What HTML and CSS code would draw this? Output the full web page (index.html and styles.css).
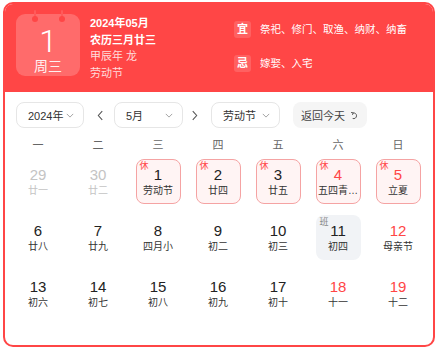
FILE: index.html
```html
<!DOCTYPE html>
<html lang="zh">
<head>
<meta charset="utf-8">
<link rel="stylesheet" href="styles.css">
</head>
<body>
<div class="card">
  <div class="header">
    <div class="datebox">
      <span class="ring ring-l"></span>
      <span class="ring ring-r"></span>
      <div class="big">1</div>
      <div class="week">周三</div>
    </div>
    <div class="info">
      <div class="l1">2024年05月</div>
      <div class="l1">农历三月廿三</div>
      <div class="l2">甲辰年 龙</div>
      <div class="l2">劳动节</div>
    </div>
    <div class="yiji">
      <div class="yj-row"><span class="badge">宜</span><span>祭祀、修门、取渔、纳财、纳畜</span></div>
      <div class="yj-row"><span class="badge">忌</span><span>嫁娶、入宅</span></div>
    </div>
  </div>

  <div class="controls">
    <div class="select sel-year"><span>2024年</span><svg class="chev" viewBox="0 0 10 6"><path d="M1 1l4 4 4-4" fill="none" stroke="#999" stroke-width="1.1"/></svg></div>
    <svg class="arrow" viewBox="0 0 8 12"><path d="M6 1L1.5 6 6 11" fill="none" stroke="#555" stroke-width="1.2"/></svg>
    <div class="select sel-month"><span>5月</span><svg class="chev" viewBox="0 0 10 6"><path d="M1 1l4 4 4-4" fill="none" stroke="#999" stroke-width="1.1"/></svg></div>
    <svg class="arrow" viewBox="0 0 8 12"><path d="M2 1l4.5 5L2 11" fill="none" stroke="#555" stroke-width="1.2"/></svg>
    <div class="select sel-hol"><span>劳动节</span><svg class="chev" viewBox="0 0 10 6"><path d="M1 1l4 4 4-4" fill="none" stroke="#999" stroke-width="1.1"/></svg></div>
    <div class="today">返回今天<svg class="undo" viewBox="0 0 10 10"><path d="M3.2 2.2A3.2 3.2 0 1 1 3 8.3" fill="none" stroke="#555" stroke-width="1.1"/><path d="M1.2 1.6l2.4 0.5-0.9 2.2" fill="none" stroke="#555" stroke-width="1.1"/></svg></div>
  </div>

  <div class="weekdays">
    <div>一</div><div>二</div><div>三</div><div>四</div><div>五</div><div>六</div><div>日</div>
  </div>

  <div class="grid">
    <div class="cell"><div class="box other"><div class="n">29</div><div class="lu">廿一</div></div></div>
    <div class="cell"><div class="box other"><div class="n">30</div><div class="lu">廿二</div></div></div>
    <div class="cell"><div class="box rest"><span class="tag">休</span><div class="n">1</div><div class="lu">劳动节</div></div></div>
    <div class="cell"><div class="box rest"><span class="tag">休</span><div class="n">2</div><div class="lu">廿四</div></div></div>
    <div class="cell"><div class="box rest"><span class="tag">休</span><div class="n">3</div><div class="lu">廿五</div></div></div>
    <div class="cell"><div class="box rest wk"><span class="tag">休</span><div class="n">4</div><div class="lu">五四青…</div></div></div>
    <div class="cell"><div class="box rest wk"><span class="tag">休</span><div class="n">5</div><div class="lu">立夏</div></div></div>

    <div class="cell"><div class="box"><div class="n">6</div><div class="lu">廿八</div></div></div>
    <div class="cell"><div class="box"><div class="n">7</div><div class="lu">廿九</div></div></div>
    <div class="cell"><div class="box"><div class="n">8</div><div class="lu">四月小</div></div></div>
    <div class="cell"><div class="box"><div class="n">9</div><div class="lu">初二</div></div></div>
    <div class="cell"><div class="box"><div class="n">10</div><div class="lu">初三</div></div></div>
    <div class="cell"><div class="box work"><span class="tag">班</span><div class="n">11</div><div class="lu">初四</div></div></div>
    <div class="cell"><div class="box wk"><div class="n">12</div><div class="lu">母亲节</div></div></div>

    <div class="cell"><div class="box"><div class="n">13</div><div class="lu">初六</div></div></div>
    <div class="cell"><div class="box"><div class="n">14</div><div class="lu">初七</div></div></div>
    <div class="cell"><div class="box"><div class="n">15</div><div class="lu">初八</div></div></div>
    <div class="cell"><div class="box"><div class="n">16</div><div class="lu">初九</div></div></div>
    <div class="cell"><div class="box"><div class="n">17</div><div class="lu">初十</div></div></div>
    <div class="cell"><div class="box wk"><div class="n">18</div><div class="lu">十一</div></div></div>
    <div class="cell"><div class="box wk"><div class="n">19</div><div class="lu">十二</div></div></div>
  </div>
</div>
</body>
</html>
```

FILE: styles.css
```css
* { box-sizing: border-box; }
html, body { margin: 0; padding: 0; background: #fff; }
body {
  font-family: "Liberation Sans", "Noto Sans CJK SC", sans-serif;
  color: #333;
}
.card {
  margin: 2px 0 0 3px;
  width: 432px;
  height: 345px;
  border: 2px solid #ff4646;
  border-radius: 10px;
  overflow: hidden;
  background: #fff;
}
.header {
  height: 88px;
  background: #ff4646;
  display: flex;
  align-items: flex-start;
  padding: 10px 0 0 11px;
  color: #fff;
}
.datebox {
  position: relative;
  width: 64px;
  height: 62px;
  border-radius: 9px;
  background: rgba(255, 255, 255, 0.2);
  display: flex;
  flex-direction: column;
  align-items: center;
}
.ring {
  position: absolute;
  top: -4px;
  width: 2px;
  height: 10px;
  background: #ff5a5a;
  border-radius: 1px;
}
.ring::after {
  content: "";
  position: absolute;
  left: -2px;
  bottom: -2px;
  width: 6px;
  height: 6px;
  border-radius: 50%;
  background: #ff4646;
}
.ring-l { left: 18px; }
.ring-r { left: 45px; }
.big {
  margin-top: 11px;
  font-size: 32px;
  line-height: 33px;
  font-family: Roboto, "Liberation Sans", sans-serif;
  font-weight: 300;
}
.week {
  font-size: 14px;
  line-height: 17px;
  opacity: 0.9;
}
.info {
  width: 144px;
  margin-left: 10px;
  padding-top: 1px;
}
.l1 {
  font-size: 11px;
  line-height: 16.5px;
  font-weight: bold;
}
.l2 {
  font-size: 11px;
  line-height: 16.5px;
  color: rgba(255, 255, 255, 0.82);
}
.yiji {
  display: flex;
  flex-direction: column;
  gap: 17px;
  padding-top: 7px;
}
.yj-row {
  display: flex;
  align-items: center;
  gap: 9px;
  font-size: 10.5px;
  line-height: 17px;
}
.badge {
  width: 17px;
  height: 17px;
  border-radius: 3px;
  background: rgba(255, 255, 255, 0.15);
  text-align: center;
  font-size: 11px;
  font-weight: bold;
  line-height: 17px;
}

.controls {
  display: flex;
  align-items: center;
  margin: 10px 0 0 11px;
  height: 26px;
}
.select {
  height: 26px;
  width: 69px;
  border: 1px solid #e6e6e6;
  border-radius: 8px;
  display: flex;
  align-items: center;
  justify-content: space-between;
  padding: 0 9px 0 11px;
  font-size: 11px;
  color: #333;
}
.sel-year { width: 68px; }
.chev { width: 8px; height: 5px; }
.arrow { width: 7px; height: 11px; margin: 0 10px 0 13px; }
.arrow + .select + .arrow { margin: 0 13px 0 8px; }
.today {
  margin-left: 13px;
  height: 26px;
  padding: 0 8px;
  border-radius: 8px;
  background: #f5f5f5;
  display: flex;
  align-items: center;
  gap: 5px;
  font-size: 11px;
  color: #444;
}
.undo { width: 9px; height: 9px; }

.weekdays {
  display: grid;
  grid-template-columns: repeat(7, 60px);
  margin: 5px 0 0 3px;
  height: 24px;
  line-height: 24px;
  text-align: center;
  font-size: 11px;
  color: #666;
}
.grid {
  display: grid;
  grid-template-columns: repeat(7, 60px);
  row-gap: 11px;
  margin: 2px 0 0 3px;
}
.cell {
  display: flex;
  justify-content: center;
}
.box {
  position: relative;
  width: 45px;
  height: 45px;
  border-radius: 8px;
  padding-top: 6px;
  text-align: center;
  border: 1px solid transparent;
}
.n {
  font-size: 15px;
  line-height: 18px;
  color: #222;
}
.lu {
  font-size: 10px;
  line-height: 14px;
  color: #333;
  white-space: nowrap;
}
.other .n, .other .lu { color: #c4c4c4; }
.wk .n { color: #ff4646; }
.rest {
  background: #fff4f4;
  border-color: #f5a3a3;
}
.work {
  background: #f1f3f6;
}
.tag {
  position: absolute;
  left: 3px;
  top: 1px;
  font-size: 9px;
  line-height: 11px;
  color: #ff4646;
}
.work .tag { color: #888; }
```
